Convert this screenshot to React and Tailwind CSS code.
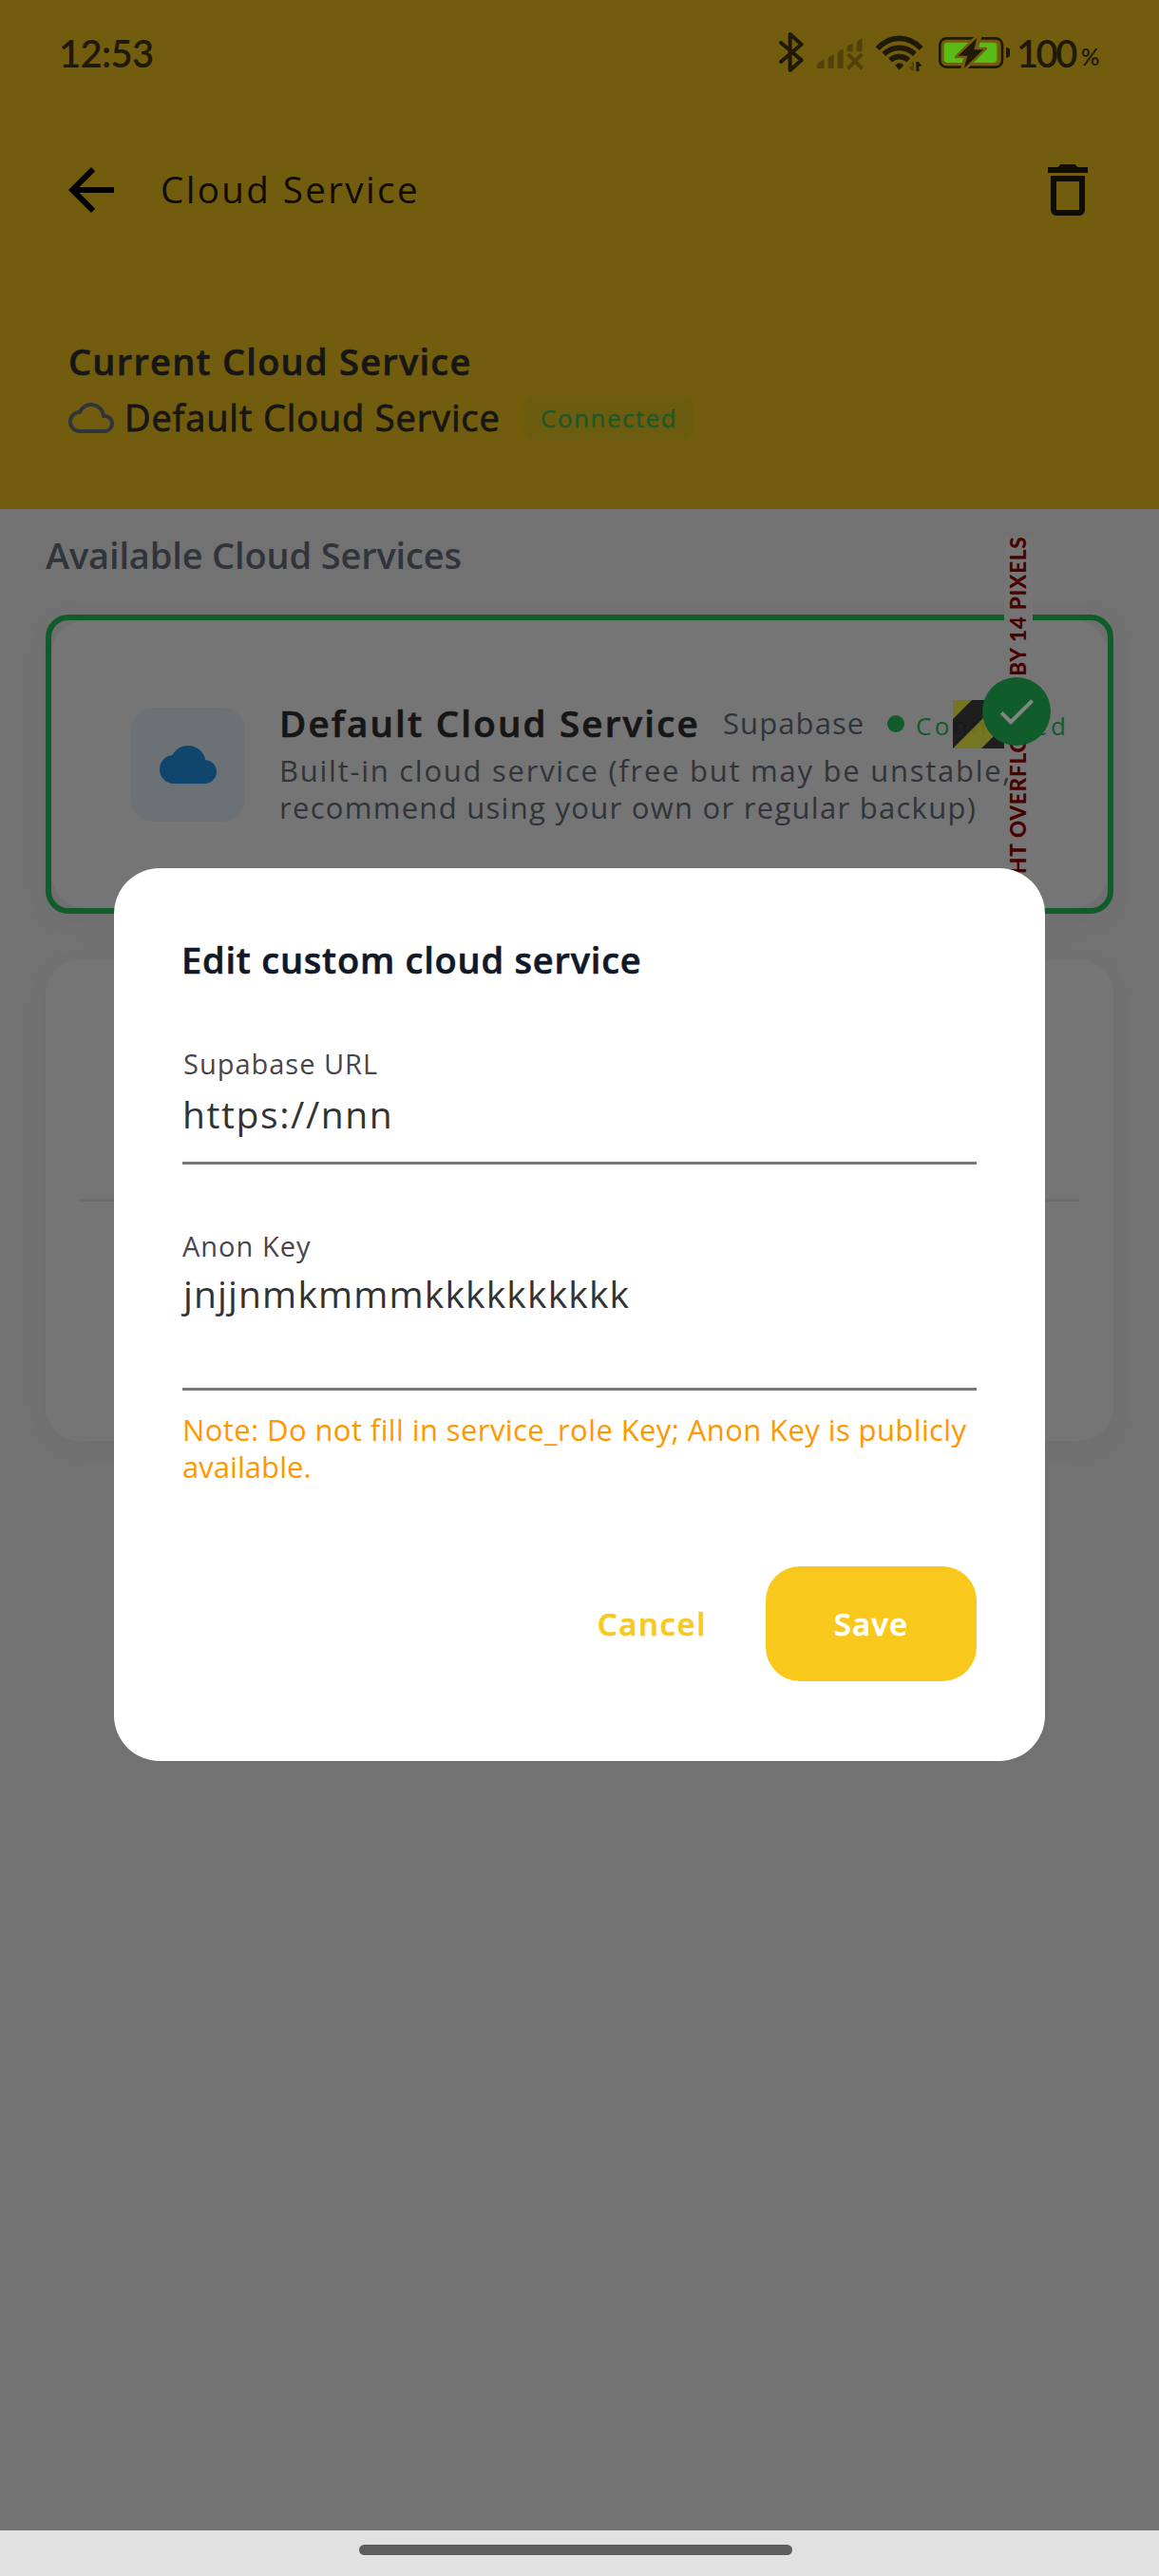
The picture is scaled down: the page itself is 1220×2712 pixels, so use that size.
import React from "react";

const ink = "#1f1a08";

function BluetoothIcon() {
  return (
    <svg className="h-[111px] w-[30px]" viewBox="113 -60 90 333" fill="none" stroke={ink} strokeWidth="12" strokeLinecap="round" strokeLinejoin="round">
      <path d="M125 75 L190 130 L154 162 V48 L190 80 L125 135" />
    </svg>
  );
}

function SignalIcon() {
  return (
    <svg className="ml-[12px] h-[111px] w-[50px]" viewBox="241 -60 150 333" fill="#524209">
      <path d="M241 156 V146 Q244 136 264 129 V156Z M276 156 V124 Q279 116 294 113 V156Z M306 156 V108 Q309 99 324 95 V156Z M336 103 V88 Q339 82 354 78 V103Z M366 103 V74 Q369 66 384 62 V103Z" />
      <path d="M343 115 L379 152 M379 115 L343 152" stroke="#524209" strokeWidth="12" strokeLinecap="square" />
    </svg>
  );
}

function WifiIcon() {
  return (
    <svg className="ml-[12px] h-[111px] w-[50px]" viewBox="428 -60 150 333" fill="none" stroke={ink} strokeWidth="17" strokeLinecap="butt">
      <path d="M433 93 Q463 61 502 61 Q541 61 571 93" />
      <path d="M453 111 Q475 91 502 91 Q529 91 551 111" />
      <path d="M473 130 Q486 119 502 119 Q518 119 531 130" />
      <path d="M489 146 Q502 132 516 146 L502 161Z" fill={ink} stroke="none" />
      <path d="M541 135 H548 V165 Q538 162 531 151 H541Z" fill="#524209" stroke="none" />
      <path d="M555 165 V135 H563 L574 149 H564 V165Z" fill={ink} stroke="none" />
    </svg>
  );
}

function BatteryIcon() {
  return (
    <svg className="ml-[16px] h-[111px] w-[76px]" viewBox="627 -60 228 333">
      <rect x="631" y="61" width="197" height="91" rx="21" fill="none" stroke={ink} strokeWidth="8" />
      <rect x="644" y="74" width="167" height="64" rx="11" fill="#58bb16" />
      <path d="M840 90 Q852 90 852 98 V114 Q852 122 840 122Z" fill={ink} />
      <path d="M741 54 L678 118 V124 H705 L696 160 H716 L780 95 V89 H754 L764 54Z" fill="#725c0d" />
      <path d="M748 60 L689 116 H718 L707 156 L768 97 H739Z" fill={ink} />
    </svg>
  );
}

function StatusBar() {
  return (
    <div className="flex h-[111px] items-center pl-[62px] font-['Lato',sans-serif] font-semibold text-[#1f1a08]">
      <span className="w-[756px] text-[40px] leading-[48px] tracking-[-0.7px]">12:53</span>
      <BluetoothIcon />
      <SignalIcon />
      <WifiIcon />
      <BatteryIcon />
      <span className="ml-[6px] w-[68px] text-[40px] leading-[48px] tracking-[-2.6px]">100</span>
      <span className="pt-[9px] text-[24px] leading-[28px]">%</span>
    </div>
  );
}

function AppBar() {
  return (
    <div className="mt-[53px] flex h-[72px] items-start pl-[60px]">
      <svg className="size-[72px]" viewBox="0 0 24 24" fill="#000">
        <path d="M20 11H7.83l5.59-5.59L12 4l-8 8 8 8 1.41-1.41L7.83 13H20v-2z" />
      </svg>
      <h1 className="ml-[37px] w-[919px] text-[38.5px] leading-[70px] tracking-[2.4px] text-[#0f0d02]">Cloud Service</h1>
      <svg className="size-[72px]" viewBox="0 0 24 24" fill="#0f0d02">
        <path d="M6 19c0 1.1.9 2 2 2h8c1.1 0 2-.9 2-2V7H6v12zM8 9h8v10H8V9zm7.5-5l-1-1h-5l-1 1H5v2h14V4h-3.5z" />
      </svg>
    </div>
  );
}

function CurrentService() {
  return (
    <div className="mt-[120px] pl-[72px] text-[#161616]">
      <h2 className="text-[38px] font-semibold leading-[48px] tracking-[1.25px] [-webkit-text-stroke:0.6px_#161616]">Current Cloud Service</h2>
      <div className="mt-[12px] flex h-[48px] items-start">
        <svg className="size-[48px]" viewBox="0 0 24 24" fill="#31343b">
          <path d="M12 6c2.62 0 4.88 1.86 5.39 4.43l.3 1.5 1.53.11c1.56.1 2.78 1.41 2.78 2.96 0 1.65-1.35 3-3 3H6c-2.21 0-4-1.79-4-4 0-2.05 1.53-3.76 3.56-3.97l1.07-.11.5-.95C8.08 7.14 9.94 6 12 6m0-2C9.11 4 6.6 5.64 5.35 8.04 2.34 8.36 0 10.91 0 14c0 3.31 2.69 6 6 6h13c2.76 0 5-2.24 5-5 0-2.64-2.05-4.78-4.65-4.96C18.67 6.59 15.64 4 12 4z" />
        </svg>
        <span className="ml-[11px] w-[420px] text-[38px] leading-[46px] tracking-[0.85px] [-webkit-text-stroke:0.8px_#161616]">Default Cloud Service</span>
        <span className="mt-px h-[46px] w-[179px] rounded-[12px] bg-[#6b5c0f] pl-[18px] text-[26px] leading-[46px] tracking-[1.5px] text-[#1c5829] [-webkit-text-stroke:0.4px_#1c5829]">Connected</span>
      </div>
    </div>
  );
}

function OverflowMarker() {
  return (
    <>
      <div className="absolute left-[949px] top-[84px] h-[51px] w-[54px] opacity-90">
        <svg className="h-[51px] w-[54px]" viewBox="0 0 54 51">
          <rect width="54" height="51" fill="#151515" />
          <path d="M0 0 H20 L0 20Z M0 51 L51 0 H54 V27 L30 51Z" fill="#75751a" />
        </svg>
      </div>
      <div className="absolute left-[1003px] top-[-88px] h-[395px] w-[30px] rotate-180 whitespace-nowrap bg-[#757575] font-['Lato',sans-serif] text-[22.5px] font-black leading-[30px] tracking-[0.75px] text-[#480000] [writing-mode:vertical-rl]">
        RIGHT OVERFLOWED BY 14 PIXELS
      </div>
      <div className="absolute left-[980px] top-[60px] flex size-[72px] items-center justify-center rounded-full bg-[#105c2b]">
        <svg className="size-[48px]" viewBox="0 0 24 24" fill="#858585">
          <path d="M9 16.17L4.83 12l-1.42 1.41L9 19 21 7l-1.41-1.41z" />
        </svg>
      </div>
    </>
  );
}

function DefaultServiceCard() {
  return (
    <section className="relative mt-[39px] h-[315px] rounded-[24px] border-6 border-[#105c2b] bg-[#6f6f6f] shadow-[0_6px_30px_rgba(0,0,0,0.03)]">
      <div className="flex h-full items-start rounded-[36px] bg-[#757575] pl-[84px]">
        <div className="mt-[92px] flex size-[120px] items-center justify-center rounded-[24px] bg-[#6b7175]">
          <svg className="size-[60px]" viewBox="0 0 24 24" fill="#10456e">
            <path d="M19.35 10.04C18.67 6.59 15.64 4 12 4 9.11 4 6.6 5.64 5.35 8.04 2.34 8.36 0 10.91 0 14c0 3.31 2.69 6 6 6h13c2.76 0 5-2.24 5-5 0-2.64-2.05-4.78-4.65-4.96z" />
          </svg>
        </div>
        <div className="ml-[36px] mt-[84px] whitespace-nowrap text-[#31343b]">
          <div className="flex h-[48px] items-center">
            <h3 className="w-[467px] text-[38.5px] font-semibold leading-[48px] tracking-[2.2px] text-[#161616] [-webkit-text-stroke:0.7px_#161616]">Default Cloud Service</h3>
            <span className="w-[173px] text-[31px] leading-[48px] tracking-[1.1px]">Supabase</span>
            <span className="mt-[2px] size-[18px] rounded-full bg-[#105c2b]" />
            <span className="ml-[12px] pt-[7px] text-[26px] leading-[41px] tracking-[3.4px] text-[#105c2b]">Connected</span>
          </div>
          <p className="relative z-10 mt-[7px] text-[31px] leading-[39px] tracking-[1.74px]">Built-in cloud service (free but may be unstable,</p>
          <p className="text-[31px] leading-[39px] tracking-[1.28px]">recommend using your own or regular backup)</p>
        </div>
      </div>
      <OverflowMarker />
    </section>
  );
}

function CustomServiceCard() {
  return (
    <section className="mt-[48px] h-[507px] rounded-[36px] bg-[#757575] px-[36px] pt-[252px] shadow-[0_6px_30px_rgba(0,0,0,0.03)]">
      <div className="h-[3px] bg-[#6c6c6c]" />
    </section>
  );
}

function EditDialog() {
  return (
    <div className="absolute left-[120px] top-[914px] z-20 flex h-[940px] w-[980px] flex-col rounded-[48px] bg-white px-[72px] pt-[72px]">
      <h2 className="-ml-px text-[38px] font-semibold leading-[48px] tracking-[0.78px] text-[#111827] [-webkit-text-stroke:0.6px_#111827]">Edit custom cloud service</h2>
      <label className="mt-[67px] pl-px text-[29px] leading-[37px] tracking-[0.99px] text-[#49454f]">Supabase URL</label>
      <div className="mt-[11px] text-[39px] leading-[48px] tracking-[1.6px] text-[#333]">https://nnn</div>
      <div className="mt-[26px] h-[3px] bg-[#79747e]" />
      <label className="mt-[67px] text-[29px] leading-[37px] tracking-[1px] text-[#49454f]">Anon Key</label>
      <div className="mt-[8px] pl-px text-[39px] leading-[48px] tracking-[1.15px] text-[#333]">jnjjnmkmmmkkkkkkkkkk</div>
      <div className="mt-[75px] h-[3px] bg-[#79747e]" />
      <p className="mt-[22px] whitespace-nowrap text-[31px] leading-[39px] tracking-[0.4px] text-[#ff9800]">Note: Do not fill in service_role Key; Anon Key is publicly</p>
      <p className="text-[31px] leading-[39px] tracking-[0.05px] text-[#ff9800]">available.</p>
      <div className="mt-[85px] flex h-[121px] items-center justify-end text-[33px] font-semibold">
        <button className="mr-[62px] tracking-[1.6px] text-[#f8c91c] [-webkit-text-stroke:0.6px_#f8c91c]">Cancel</button>
        <button className="h-[121px] w-[222px] rounded-[36px] bg-[#f8c91c] tracking-[1.1px] text-white [-webkit-text-stroke:0.6px_#fff]">Save</button>
      </div>
    </div>
  );
}

export default function App() {
  return (
    <div className="relative flex h-[2712px] w-[1220px] flex-col overflow-hidden bg-[#727272] font-['Open_Sans',sans-serif]">
      <header className="h-[536px] bg-[#725c0d]">
        <StatusBar />
        <AppBar />
        <CurrentService />
      </header>
      <main className="flex-1 px-[48px] pt-[24px]">
        <h2 className="text-[38px] font-semibold leading-[48px] tracking-[-0.16px] text-[#31343b]">Available Cloud Services</h2>
        <DefaultServiceCard />
        <CustomServiceCard />
      </main>
      <footer className="flex h-[48px] justify-center bg-[#e2e2e2] pt-[15px]">
        <div className="mr-[8px] h-[11px] w-[456px] rounded-full bg-[#5e5e5e]" />
      </footer>
      <EditDialog />
    </div>
  );
}
